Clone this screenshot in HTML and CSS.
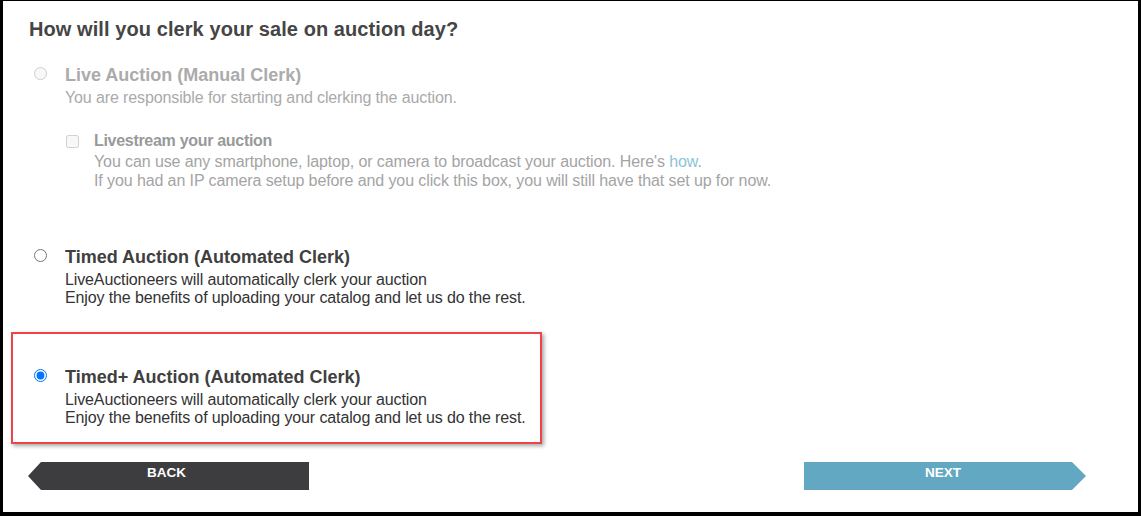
FILE: index.html
```html
<!DOCTYPE html>
<html lang="en">
<head>
    <meta charset="UTF-8">
    <meta name="viewport" content="width=device-width, initial-scale=1.0">
    <title>Auction Clerking</title>
    <link rel="stylesheet" href="styles.css">
</head>
<body>

<h1 class="page-title">How will you clerk your sale on auction day?</h1>

<div class="options">
    <div class="option option-disabled option-live">
        <input type="radio" name="clerk" class="option-radio" disabled>
        <div class="option-body">
            <div class="option-title">Live Auction (Manual Clerk)</div>
            <div class="option-desc">You are responsible for starting and clerking the auction.</div>

            <div class="livestream">
                <input type="checkbox" class="livestream-check" disabled>
                <div>
                    <div class="livestream-title">Livestream your auction</div>
                    <div class="livestream-desc">
                        You can use any smartphone, laptop, or camera to broadcast your auction. Here's <a href="#">how</a>.<br>
                        If you had an IP camera setup before and you click this box, you will still have that set up for now.
                    </div>
                </div>
            </div>
        </div>
    </div>

    <div class="option option-timed">
        <input type="radio" name="clerk" class="option-radio">
        <div class="option-body">
            <div class="option-title">Timed Auction (Automated Clerk)</div>
            <div class="option-desc">
                LiveAuctioneers will automatically clerk your auction<br>
                Enjoy the benefits of uploading your catalog and let us do the rest.
            </div>
        </div>
    </div>

    <div class="option option-selected">
        <input type="radio" name="clerk" class="option-radio" checked>
        <div class="option-body">
            <div class="option-title">Timed+ Auction (Automated Clerk)</div>
            <div class="option-desc">
                LiveAuctioneers will automatically clerk your auction<br>
                Enjoy the benefits of uploading your catalog and let us do the rest.
            </div>
        </div>
    </div>
</div>

<div class="actions">
    <button class="nav-btn back">BACK</button>
    <button class="nav-btn next">NEXT</button>
</div>

</body>
</html>
```

FILE: styles.css
```css
* {
    box-sizing: border-box;
}
body {
    font-family: "Liberation Sans", Arial, sans-serif;
    margin: 0;
    height: 516px;
    background-color: white;
    border-style: solid;
    border-color: black;
    border-width: 1px 3px 4px 3px;
    color: #333;
}
.page-title {
    font-size: 20px;
    line-height: 24px;
    font-weight: bold;
    color: #454545;
    margin: 16px 0 21px 26px;
    letter-spacing: 0.08px;
}
.options {
    margin-left: 8px;
}
.option {
    display: flex;
    align-items: flex-start;
    border: 2px solid transparent;
    padding-left: 21px;
}
.option-radio {
    width: 13px;
    height: 13px;
    margin: 3px 18px 0 0;
    flex-shrink: 0;
}
.option-title {
    font-size: 18px;
    line-height: 22px;
    font-weight: bold;
    color: #404040;
    margin-bottom: 3px;
}
.option-desc {
    font-size: 16px;
    line-height: 18px;
    letter-spacing: -0.12px;
    color: #333;
}
.option-disabled .option-title {
    color: #ababab;
}
.option-disabled .option-desc {
    color: #aaa;
}
.livestream {
    display: flex;
    align-items: flex-start;
    margin-top: 24px;
}
.livestream-check {
    width: 13px;
    height: 13px;
    margin: 4px 15px 0 1px;
    flex-shrink: 0;
}
.livestream-title {
    font-size: 16px;
    line-height: 20px;
    font-weight: bold;
    letter-spacing: -0.3px;
    color: #999;
}
.livestream-desc {
    font-size: 16px;
    line-height: 19px;
    letter-spacing: -0.1px;
    color: #a4a4a4;
    margin-top: 1px;
    white-space: nowrap;
}
.livestream-desc a {
    color: #8cc4d6;
    text-decoration: none;
}
.option-timed {
    margin-top: 52px;
}
.option-selected {
    margin-top: 23px;
    width: fit-content;
    padding: 32px 14px 15px 21px;
    border-color: #ee4449;
    box-shadow: 2px 2px 4px rgba(0, 0, 0, 0.35);
}
.actions {
    display: flex;
    justify-content: space-between;
    margin: 18px 52px 0 25px;
}
.nav-btn {
    width: 281px;
    height: 28px;
    border: none;
    padding: 0 4px 6px 0;
    font-family: "Liberation Sans", Arial, sans-serif;
    font-size: 13.5px;
    line-height: 22px;
    font-weight: bold;
    color: white;
    cursor: pointer;
}
.back {
    background-color: #3d3c3e;
    clip-path: polygon(13px 0, 100% 0, 100% 100%, 13px 100%, 0 50%);
}
.next {
    width: 282px;
    background-color: #62a8c2;
    clip-path: polygon(0 0, calc(100% - 14px) 0, 100% 50%, calc(100% - 14px) 100%, 0 100%);
}
```
